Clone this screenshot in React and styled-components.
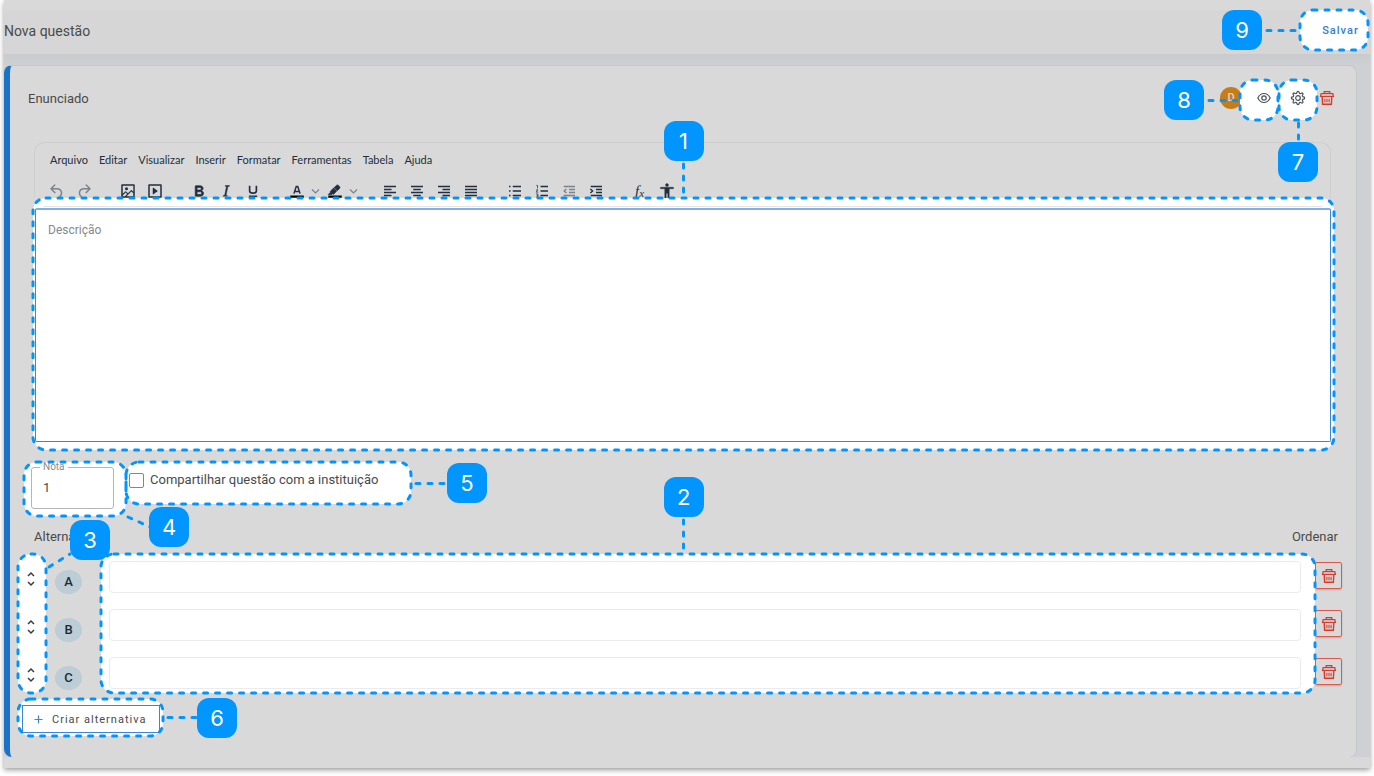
import React from "react";
import styled, { createGlobalStyle } from "styled-components";

const BLUE = "#0095ff";
const FONT = 'Roboto, "Liberation Sans", sans-serif';

const GlobalStyle = createGlobalStyle`
  * {
    box-sizing: border-box;
  }

  body {
    margin: 0;
    background: #fff;
    font-family: ${FONT};
    color: #4a4a4a;
  }

  button, input, textarea {
    margin: 0;
    padding: 0;
    font-family: inherit;
    color: inherit;
  }

  button {
    border: 0;
    background: none;
    cursor: pointer;
  }
`;

const Page = styled.div`
  margin: 0 4px 8px;
  padding: 10px 0 11px;
  background-color: #d9d9d9;
  box-shadow: 0 2px 5px rgba(0, 0, 0, 0.4);
`;

const Header = styled.header`
  display: flex;
  justify-content: space-between;
  align-items: flex-start;
  height: 44px;
  padding: 0 2px 0 0;
  background-color: #d6d6d6;

  h1 {
    margin: 0;
    font-weight: 400;
    font-size: 14px;
    line-height: 42px;
  }
`;

const Main = styled.main`
  padding: 11px 13px 0 0;
  background: linear-gradient(#c8cacd, #cfd0d3 12px);
`;

const Card = styled.section`
  padding: 14px 14px 21px 8px;
  border: 1px solid #c6c7c9;
  border-left: 6px solid #1a73c4;
  border-bottom: 0;
  border-radius: 8px;
  background-color: #d9d9d9;
`;

/* highlighted areas and their numbered callouts */

const SpotBox = styled.div`
  position: relative;
  display: ${(p) => (p.$column ? "flex" : "block")};
  flex-direction: column;
  border-radius: 13px;
  background-color: #fff;
`;

const Outline = styled.svg`
  position: absolute;
  inset: 0;
  width: 100%;
  height: 100%;
  overflow: visible;
  pointer-events: none;
  z-index: 2;
  fill: none;
  stroke: ${BLUE};
  stroke-width: 3;
  stroke-linecap: round;
  stroke-dasharray: 4 8;
`;

const places = {
  top: `bottom: 100%; left: 50%; transform: translateX(-50%); align-items: center; flex-direction: column-reverse;`,
  bottom: `top: 100%; left: 50%; transform: translateX(-50%); align-items: center; flex-direction: column;`,
  left: `right: 100%; top: 50%; transform: translateY(-50%); align-items: center; flex-direction: row-reverse;`,
  right: `left: 100%; top: 50%; transform: translateY(-50%); align-items: center; flex-direction: row;`,
  topRight: `left: 100%; bottom: 100%; align-items: flex-end;`,
  bottomRight: `left: 100%; top: 100%; align-items: flex-start;`,
};

const CalloutBox = styled.div`
  position: absolute;
  z-index: 3;
  display: flex;
  ${(p) => places[p.$place]}
`;

const Line = styled.svg`
  flex: none;
  display: block;
  overflow: visible;
  fill: none;
  stroke: ${BLUE};
  stroke-width: 3;
  stroke-linecap: round;
  stroke-dasharray: 4 8;
`;

const Badge = styled.span`
  flex: none;
  display: block;
  width: 40px;
  height: 40px;
  border-radius: 12px;
  background-color: ${BLUE};
  color: #fff;
  font-family: Inter, sans-serif;
  font-size: 22px;
  line-height: 40px;
  text-align: center;
`;

const CornerBadge = styled(Badge)`
  margin-top: ${(p) => p.$pull || 0}px;
  margin-bottom: ${(p) => p.$drop || 0}px;
`;

function Callout({ n, place, length = 36 }) {
  const vertical = place === "top" || place === "bottom";
  return (
    <CalloutBox $place={place}>
      <Line width={vertical ? 3 : length} height={vertical ? length : 3}>
        {vertical ? (
          <path d={`M1.5 3V${length}`} />
        ) : (
          <path d={`M5 1.5H${length}`} />
        )}
      </Line>
      <Badge>{n}</Badge>
    </CalloutBox>
  );
}

function Spot({ as, className, column, children }) {
  return (
    <SpotBox as={as} className={className} $column={column}>
      {children}
      <Outline aria-hidden="true">
        <rect width="100%" height="100%" rx="13" />
      </Outline>
    </SpotBox>
  );
}

const SaveSpot = styled(Spot)`
  width: 68px;
  height: 40px;
`;

const SaveButton = styled.button`
  width: 100%;
  height: 40px;
  padding-left: 13px;
  font-weight: 500;
  font-size: 11px;
  letter-spacing: 1px;
  color: #2f80d6;
`;

const CardHead = styled.div`
  display: flex;
  height: 40px;
  margin: 0 7px 22px 10px;

  h2 {
    flex: 1;
    margin: 0;
    font-weight: 400;
    font-size: 13px;
    line-height: 38px;
  }
`;

const Avatar = styled.span`
  width: 22px;
  height: 22px;
  margin: 7px -2px 0 0;
  border-radius: 50%;
  background-color: #c77d15;
  color: #d9d9d9;
  font-weight: 500;
  font-size: 11px;
  line-height: 22px;
  text-align: center;
`;

const IconSpot = styled(Spot)`
  width: 38px;
  height: 40px;
  margin-right: 1px;
`;

const IconButton = styled.button`
  display: flex;
  align-items: center;
  justify-content: center;
  width: 100%;
  height: 36px;
  padding-left: ${(p) => p.$indent || 0}px;
  color: #4c5259;
`;

const DeleteButton = styled.button`
  display: flex;
  align-items: center;
  justify-content: center;
  width: ${(p) => (p.$outlined ? 27 : 17)}px;
  height: ${(p) => (p.$outlined ? 27 : 36)}px;
  border: ${(p) => (p.$outlined ? "1px solid #dd5a4b" : "0")};
  border-radius: 2px;
  box-shadow: ${(p) => (p.$outlined ? "0 1px 2px rgba(0, 0, 0, 0.2)" : "none")};
  color: #d8392a;
`;

const Editor = styled.div`
  margin: 0 11px 12px 16px;
`;

const Tools = styled.div`
  height: 56px;
  padding: 8px 8px 0;
  border: 1px solid #cecece;
  border-bottom: 0;
  border-radius: 10px 10px 0 0;
  color: #222f3e;
`;

const MenuBar = styled.div`
  display: flex;
  gap: 11px;
  padding-left: 7px;
  margin-bottom: 13px;

  button {
    font-family: Lato, sans-serif;
    font-size: 11px;
    line-height: 18px;
  }
`;

const ToolBar = styled.div`
  display: flex;
  gap: 17px;
`;

const ToolGroup = styled.div`
  display: flex;
`;

const ToolButton = styled.button`
  display: flex;
  align-items: center;
  justify-content: center;
  width: ${(p) => (p.$narrow ? 11 : 27)}px;
  height: 18px;
  opacity: ${(p) => (p.$faded ? 0.5 : 1)};

  i {
    font-family: "Liberation Serif", serif;
    font-size: 15px;
    line-height: 16px;
  }

  sub {
    font-size: 11px;
    line-height: 8px;
    vertical-align: -1px;
  }
`;

const EditorSpot = styled(Spot)`
  margin: 0 -3px 0 -1px;
  padding: 8px 3px 8px 2px;
`;

const Divider = styled.div`
  height: 1px;
  margin: 0 9px 1px;
  background-color: #e6e6e6;
`;

const TextArea = styled.textarea`
  display: block;
  width: 100%;
  height: 234px;
  padding: 12px;
  border: 1px solid #3d86d6;
  border-top: 2px solid #7fb0ea;
  border-radius: 2px;
  outline: 0;
  resize: none;
  background-color: #fff;
  font-size: 12px;
  line-height: 16px;

  &::placeholder {
    color: #85898e;
    opacity: 1;
  }
`;

const Fields = styled.div`
  display: flex;
  align-items: flex-start;
  margin-left: 6px;
  margin-bottom: 10px;
`;

const GradeSpot = styled(Spot)`
  width: 102px;
  height: 54px;
  padding: 5px 7px;

  label {
    position: absolute;
    top: 0;
    left: 16px;
    padding: 0 3px;
    background-color: #fff;
    color: #8c8c8c;
    font-size: 10px;
    line-height: 10px;
  }

  input {
    display: block;
    width: 83px;
    height: 42px;
    padding: 0 11px 2px;
    border: 1px solid #b5b5b5;
    border-radius: 3px;
    outline: 0;
    background: none;
    font-size: 13px;
  }
`;

const ShareSpot = styled(Spot)`
  width: 285px;
  height: 42px;
  padding: 10px 3px;

  label {
    display: flex;
    align-items: center;
    gap: 6px;
    font-size: 13px;
    line-height: 16px;
    white-space: nowrap;
  }

  input {
    appearance: none;
    width: 15px;
    height: 15px;
    border: 1px solid #858585;
    border-radius: 2px;
    background-color: #fff;
  }
`;

const ListHead = styled.div`
  display: flex;
  justify-content: space-between;
  margin: 0 4px 6px 16px;

  h3 {
    margin: 0;
    font-weight: 400;
    font-size: 13px;
    line-height: 22px;
  }
`;

const Options = styled.div`
  display: flex;
  height: 139px;
  margin-bottom: 6px;
`;

const OrderSpot = styled(Spot)`
  flex: none;
  width: 28px;
  padding: 15px 2px 0 0;
  align-items: center;
  gap: 28px;
`;

const OrderButton = styled.button`
  height: 20px;
  line-height: 0;
`;

const Letters = styled.div`
  display: flex;
  flex-direction: column;
  gap: 24px;
  padding: 16px 19px 0 9px;
`;

const Letter = styled.span`
  width: 27px;
  height: 24px;
  border-radius: 50%;
  background-color: #bccdd5;
  color: #1c2b33;
  font-weight: 500;
  font-size: 13px;
  line-height: 24px;
  text-align: center;
`;

const AnswerSpot = styled(Spot)`
  flex: 1;
  gap: 16px;
  padding: 7px 14px 0 8px;

  input {
    height: 32px;
    padding: 0 10px;
    border: 1px solid #e9ebed;
    border-radius: 4px;
    outline: 0;
    background-color: #fff;
    font-size: 13px;
  }
`;

const AnswerCallout = styled.div`
  position: absolute;
  top: 0;
  left: 48%;
`;

const DeleteColumn = styled.div`
  display: flex;
  flex-direction: column;
  gap: 21px;
  padding-top: 8px;
`;

const CreateSpot = styled(Spot)`
  width: 145px;
  height: 37px;
  padding: 6px 3px 3px 4px;
`;

const CreateButton = styled.button`
  display: flex;
  align-items: center;
  gap: 9px;
  width: 138px;
  height: 28px;
  padding-left: 11px;
  border: 1px solid #3d86d6;
  font-size: 11px;
  letter-spacing: 1px;
  white-space: nowrap;

  svg {
    flex: none;
    color: #3d86d6;
  }
`;

/* icons */

const TrashIcon = () => (
  <svg width="16" height="16" viewBox="0 0 16 16" fill="none" stroke="currentColor">
    <path d="M5.200 3.500V1.700h5.600v1.800" strokeWidth="1.300" />
    <path d="M2.200 3.500h11.600l.7 3h-13z" strokeWidth="1.200" fill="#d8392a" fillOpacity=".2" />
    <path d="M3.200 6.500l.4 7.800h8.800l.4-7.800" strokeWidth="1.400" />
    <path d="M5.900 8.800v3.400M8 8.800v3.400M10.100 8.800v3.400" strokeWidth="1.100" />
  </svg>
);

const EyeIcon = () => (
  <svg width="14" height="14" viewBox="0 0 14 14" fill="none" stroke="currentColor" strokeWidth="1.200">
    <path d="M.8 7C2.2 4.200 4.400 2.500 7 2.500S11.800 4.200 13.200 7C11.800 9.800 9.600 11.500 7 11.500S2.200 9.800.8 7z" />
    <circle cx="7" cy="7" r="2.200" />
  </svg>
);

/* eight rounded teeth round the hub */
const gearPath = Array.from({ length: 64 }, (_, i) => {
  const angle = (i / 64) * Math.PI * 2;
  const r = 5.7 + 0.9 * Math.tanh(2.5 * Math.cos(angle * 8));
  const x = (8 + r * Math.sin(angle)).toFixed(2);
  const y = (8 - r * Math.cos(angle)).toFixed(2);
  return `${i ? "L" : "M"}${x} ${y}`;
}).join("");

const GearIcon = () => (
  <svg width="16" height="16" viewBox="0 0 16 16" fill="none" stroke="currentColor" strokeWidth="1.200" strokeLinejoin="round">
    <path d={`${gearPath}z`} />
    <circle cx="8" cy="8" r="2.300" />
  </svg>
);

const SortIcon = () => (
  <svg width="10" height="18" viewBox="0 0 10 18" fill="none" stroke="#3c3c3c" strokeWidth="1.500">
    <path d="M2 6l3-3 3 3M2 12l3 3 3-3" />
  </svg>
);

const PlusIcon = () => (
  <svg width="9" height="9" viewBox="0 0 9 9" stroke="currentColor" strokeWidth="1.200">
    <path d="M4.500 0.500v8M0.500 4.500h8" />
  </svg>
);

const ChevronIcon = () => (
  <svg width="9" height="9" viewBox="0 0 9 9" fill="none" stroke="#7b828a" strokeWidth="1.200">
    <path d="M1 2.500l3.500 3.500L8 2.500" />
  </svg>
);

const UNDO =
  "M6.4 8H12c3.7 0 6.2 2 6.8 5.1.6 2.7-.4 5.6-2.3 6.8a1 1 0 01-1-1.8c1.100-.6 1.800-2.700 1.400-4.600-.5-2.100-2.100-3.500-4.900-3.500H6.400l3.300 3.300a1 1 0 11-1.400 1.400l-5-5a1 1 0 010-1.400l5-5a1 1 0 011.400 1.400L6.400 8z";

const bars = (rows) => rows.map(([x, y, w]) => `M${x} ${y}h${w}v2h-${w}z`).join("");

const glyphs = {
  undo: <path d={UNDO} />,
  redo: <path d={UNDO} transform="matrix(-1 0 0 1 24 0)" />,
  image: (
    <path d="M5 15.700l3.300-3.200c.3-.3.7-.3 1 0L12 15l4.100-4c.3-.4.8-.4 1 0l2 1.900V5H5v10.700zM5 18v1h3l2.800-2.900-2-2L5 17.900zm14-3l-2.500-2.400-6.400 6.500H19v-4zM4 3h16c.6 0 1 .4 1 1v16c0 .6-.4 1-1 1H4a1 1 0 01-1-1V4c0-.6.4-1 1-1zm6 8a2 2 0 100-4 2 2 0 000 4z" fillRule="evenodd" />
  ),
  media: (
    <path d="M4 3h16c.6 0 1 .4 1 1v16c0 .6-.4 1-1 1H4a1 1 0 01-1-1V4c0-.6.4-1 1-1zm1 2v14h14V5H5zm4.800 2.600l5.600 4a.5.5 0 010 .8l-5.600 4A.5.5 0 019 16V8a.5.5 0 01.8-.4z" fillRule="evenodd" />
  ),
  bold: (
    <path d="M7.800 19c-.3 0-.5 0-.6-.2l-.2-.5V5.700c0-.2 0-.4.2-.5l.6-.2h5c1.500 0 2.700.3 3.500 1 .7.6 1.100 1.400 1.100 2.500a3 3 0 01-.6 1.900c-.4.6-1 1-1.600 1.200.4.1.9.3 1.300.6s.8.7 1 1.200c.4.4.5 1 .5 1.600 0 1.300-.4 2.300-1.300 3-.8.7-2.100 1-3.800 1H7.800zm5-8.300c.6 0 1.200-.1 1.600-.5.4-.3.6-.7.6-1.300 0-1.100-.8-1.700-2.300-1.700H9.300v3.500h3.400zm.5 6c.7 0 1.300-.1 1.700-.4.4-.4.6-.9.6-1.500s-.2-1-.7-1.400c-.4-.3-1-.4-2-.4H9.400v3.800h4z" fillRule="evenodd" stroke="currentColor" />
  ),
  italic: (
    <path d="M16.700 4.700l-.1.9h-.3c-.6 0-1 0-1.400.3-.3.3-.4.6-.5 1.100l-2.100 9.800v.6c0 .5.4.8 1.400.8h.2l-.2.8H8l.2-.8h.2c1.100 0 1.800-.5 2-1.500l2-9.800.1-.5c0-.6-.4-.8-1.400-.8h-.3l.2-.9h5.800z" stroke="currentColor" strokeWidth=".6" />
  ),
  underline: (
    <path d="M7.500 5v6.500c0 2 2 3.300 4.500 3.300s4.500-1.300 4.500-3.300V5M6.500 19h11" fill="none" stroke="currentColor" strokeWidth="2.200" />
  ),
  color: (
    <>
      <path d="M3 18h18v3H3z" fill="#000" />
      <path d="M7.900 15.500L11 6h2l3.100 9.500M9 12.600h6" fill="none" stroke="currentColor" strokeWidth="2" />
    </>
  ),
  highlight: (
    <>
      <path d="M3 18h18v3H3z" fill="#000" />
      <path d="M7.700 16.700H3l3.300-3.300-.7-.8L10.200 8l4 4.100-4 4.200c-.2.2-.6.2-.8 0l-.6-.7zM11 7.400l3-2.900a2 2 0 012.600 0L18 6c.7.7.7 2 0 2.700l-2.900 2.900z" stroke="currentColor" />
    </>
  ),
  left: <path d={bars([[4, 5, 16], [4, 9, 10], [4, 13, 16], [4, 17, 10]])} />,
  center: <path d={bars([[4, 5, 16], [7, 9, 10], [4, 13, 16], [7, 17, 10]])} />,
  right: <path d={bars([[4, 5, 16], [10, 9, 10], [4, 13, 16], [10, 17, 10]])} />,
  justify: <path d={bars([[4, 5, 16], [4, 9, 16], [4, 13, 16], [4, 17, 16]])} />,
  bullets: <path d={bars([[4, 5, 2], [9, 5, 11], [4, 11, 2], [9, 11, 11], [4, 17, 2], [9, 17, 11]])} />,
  numbers: (
    <>
      <path d={bars([[10, 5, 10], [10, 11, 10], [10, 17, 10]])} />
      <path d="M4.500 4.500H6v4M4 10.500h2.500L4.200 13.500h2.800M4 16h2.600v2H5m1.600 0v2H4" fill="none" stroke="currentColor" />
    </>
  ),
  outdent: (
    <>
      <path d={bars([[5, 5, 15], [12, 9, 8], [12, 13, 8], [5, 17, 15]])} />
      <path d="M8.500 9.300L5.500 12l3 2.700" fill="none" stroke="currentColor" strokeWidth="1.800" />
    </>
  ),
  indent: (
    <>
      <path d={bars([[5, 5, 15], [12, 9, 8], [12, 13, 8], [5, 17, 15]])} />
      <path d="M4.500 9.300l3 2.700-3 2.700" fill="none" stroke="currentColor" strokeWidth="1.800" />
    </>
  ),
  access: (
    <path d="M12 2a2 2 0 012 2 2 2 0 01-2 2 2 2 0 01-2-2c0-1.100.9-2 2-2zm8 7h-5v12c0 .6-.4 1-1 1a1 1 0 01-1-1v-5c0-.6-.4-1-1-1a1 1 0 00-1 1v5c0 .6-.4 1-1 1a1 1 0 01-1-1V9H4a1 1 0 110-2h16c.6 0 1 .4 1 1s-.4 1-1 1z" stroke="currentColor" strokeWidth=".5" />
  ),
};

const toolGroups = [
  ["undo", "redo"],
  ["image", "media"],
  ["bold", "italic", "underline"],
  ["color", "chevron", "highlight", "chevron"],
  ["left", "center", "right", "justify"],
  ["bullets", "numbers", "outdent", "indent"],
  ["formula", "access"],
];

const faded = ["undo", "redo", "outdent"];

const menus = ["Arquivo", "Editar", "Visualizar", "Inserir", "Formatar", "Ferramentas", "Tabela", "Ajuda"];

const letters = ["A", "B", "C"];

function Tool({ name }) {
  if (name === "chevron") {
    return (
      <ToolButton $narrow aria-label="Mais cores">
        <ChevronIcon />
      </ToolButton>
    );
  }
  if (name === "formula") {
    return (
      <ToolButton>
        <i>
          f<sub>x</sub>
        </i>
      </ToolButton>
    );
  }
  return (
    <ToolButton $faded={faded.includes(name)} aria-label={name}>
      <svg width="18" height="18" viewBox="0 0 24 24" fill="currentColor">
        {glyphs[name]}
      </svg>
    </ToolButton>
  );
}

export default function App() {
  return (
    <>
      <GlobalStyle />
      <Page>
        <Header>
          <h1>Nova questão</h1>
          <SaveSpot>
            <SaveButton>Salvar</SaveButton>
            <Callout n={9} place="left" length={38} />
          </SaveSpot>
        </Header>
        <Main>
          <Card>
            <CardHead>
              <h2>Enunciado</h2>
              <Avatar>D</Avatar>
              <IconSpot>
                <IconButton $indent={10} aria-label="Visualizar">
                  <EyeIcon />
                </IconButton>
                <Callout n={8} place="left" />
              </IconSpot>
              <IconSpot>
                <IconButton aria-label="Configurações">
                  <GearIcon />
                </IconButton>
                <Callout n={7} place="bottom" length={22} />
              </IconSpot>
              <DeleteButton aria-label="Excluir questão">
                <TrashIcon />
              </DeleteButton>
            </CardHead>

            <Editor>
              <Tools>
                <MenuBar>
                  {menus.map((menu) => (
                    <button key={menu}>{menu}</button>
                  ))}
                </MenuBar>
                <ToolBar>
                  {toolGroups.map((group, i) => (
                    <ToolGroup key={i}>
                      {group.map((name, j) => (
                        <Tool key={j} name={name} />
                      ))}
                    </ToolGroup>
                  ))}
                </ToolBar>
              </Tools>
              <EditorSpot>
                <Divider />
                <TextArea placeholder="Descrição" aria-label="Descrição" />
                <Callout n={1} place="top" length={37} />
              </EditorSpot>
            </Editor>

            <Fields>
              <GradeSpot>
                <input id="grade" defaultValue="1" />
                <label htmlFor="grade">Nota</label>
                <CalloutBox $place="bottomRight">
                  <Line width="23" height="12">
                    <path d="M2 1l22 10" />
                  </Line>
                  <CornerBadge $pull={-9}>4</CornerBadge>
                </CalloutBox>
              </GradeSpot>
              <ShareSpot>
                <label>
                  <input type="checkbox" />
                  Compartilhar questão com a instituição
                </label>
                <Callout n={5} place="right" />
              </ShareSpot>
            </Fields>

            <ListHead>
              <h3>Alternativas</h3>
              <h3>Ordenar</h3>
            </ListHead>

            <Options>
              <OrderSpot column>
                {letters.map((letter) => (
                  <OrderButton key={letter} aria-label={`Mover ${letter}`}>
                    <SortIcon />
                  </OrderButton>
                ))}
                <CalloutBox $place="topRight">
                  <Line width="24" height="1">
                    <path d="M3 14L24 1" />
                  </Line>
                  <CornerBadge $drop={-6}>3</CornerBadge>
                </CalloutBox>
              </OrderSpot>
              <Letters>
                {letters.map((letter) => (
                  <Letter key={letter}>{letter}</Letter>
                ))}
              </Letters>
              <AnswerSpot column>
                {letters.map((letter) => (
                  <input key={letter} aria-label={`Alternativa ${letter}`} />
                ))}
                <AnswerCallout>
                  <Callout n={2} place="top" length={37} />
                </AnswerCallout>
              </AnswerSpot>
              <DeleteColumn>
                {letters.map((letter) => (
                  <DeleteButton key={letter} $outlined aria-label={`Excluir ${letter}`}>
                    <TrashIcon />
                  </DeleteButton>
                ))}
              </DeleteColumn>
            </Options>

            <CreateSpot>
              <CreateButton>
                <PlusIcon />
                Criar alternativa
              </CreateButton>
              <Callout n={6} place="right" length={34} />
            </CreateSpot>
          </Card>
        </Main>
      </Page>
    </>
  );
}
